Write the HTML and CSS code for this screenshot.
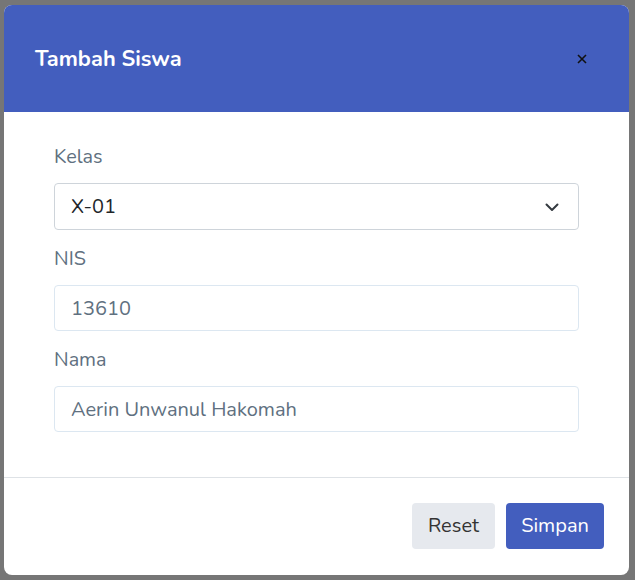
FILE: index.html
```html
<!DOCTYPE html>
<html lang="id">
<head>
<meta charset="utf-8">
<title>Tambah Siswa</title>
<link rel="stylesheet" href="styles.css">
</head>
<body>
<div class="backdrop">
  <div class="modal">
    <div class="modal-header">
      <h5 class="modal-title">Tambah Siswa</h5>
      <button class="close" type="button" aria-label="Close">
        <svg width="10" height="10" viewBox="0 0 10 10"><path d="M1 1L9 9M9 1L1 9" stroke="#111" stroke-width="1.6" fill="none"/></svg>
      </button>
    </div>
    <div class="modal-body">
      <div class="field">
        <label class="label">Kelas</label>
        <div class="select">
          <span class="select-value">X-01</span>
          <svg class="chev" width="16" height="16" viewBox="0 0 16 16"><path d="M2.5 5.5L8 11L13.5 5.5" stroke="#343a40" stroke-width="2" fill="none" stroke-linecap="round" stroke-linejoin="round"/></svg>
        </div>
      </div>
      <div class="field">
        <label class="label">NIS</label>
        <div class="input">13610</div>
      </div>
      <div class="field">
        <label class="label">Nama</label>
        <div class="input">Aerin Unwanul Hakomah</div>
      </div>
    </div>
    <div class="modal-footer">
      <button class="btn btn-light" type="button">Reset</button>
      <button class="btn btn-primary" type="button">Simpan</button>
    </div>
  </div>
</div>
</body>
</html>
```

FILE: styles.css
```css
* { box-sizing: border-box; }
html, body { margin: 0; padding: 0; }
body {
  width: 635px;
  height: 580px;
  background: #767676;
  font-family: "Nunito", "Lato", "Noto Sans", sans-serif;
  overflow: hidden;
}
.backdrop {
  padding: 5px 6px 5px 4px;
  height: 580px;
}
.modal {
  background: #fff;
  border-radius: 8px;
  overflow: hidden;
  height: 570px;
  display: flex;
  flex-direction: column;
}
.modal-header {
  background: #435ebe;
  height: 107px;
  padding: 0 42px 0 31px;
  display: flex;
  align-items: center;
  justify-content: space-between;
}
.modal-title {
  margin: 0;
  color: #fff;
  font-size: 21.8px;
  font-weight: 700;
}
.close {
  background: none;
  border: 0;
  padding: 0;
  width: 10px;
  height: 10px;
  display: flex;
}
.modal-body {
  padding: 33px 50px 0 50px;
  flex: 1;
  display: flex;
  flex-direction: column;
  gap: 17px;
}
.field {
  display: flex;
  flex-direction: column;
  gap: 14px;
}
.label {
  color: #607080;
  font-size: 19.8px;
  line-height: 24px;
}
.select, .input {
  height: 47px;
  border-radius: 4px;
  padding: 0 16px;
  display: flex;
  align-items: center;
  font-size: 20px;
}
.select {
  border: 1px solid #ced4da;
  justify-content: space-between;
  padding-right: 18px;
  color: #212529;
}
.input {
  border: 1px solid #dce7f1;
  color: #607080;
  height: 46px;
}
.modal-footer {
  border-top: 1px solid #dee2e6;
  height: 98px;
  display: flex;
  align-items: center;
  justify-content: flex-end;
  gap: 11px;
  padding: 0 25px 2px 0;
}
.btn {
  height: 46px;
  border: 0;
  border-radius: 4px;
  font-family: inherit;
  font-size: 20px;
  padding: 0 14px;
}
.btn-light { background: #e6e9ee; color: #333; width: 83px; }
.btn-primary { background: #435ebe; color: #fff; width: 98px; }
```
